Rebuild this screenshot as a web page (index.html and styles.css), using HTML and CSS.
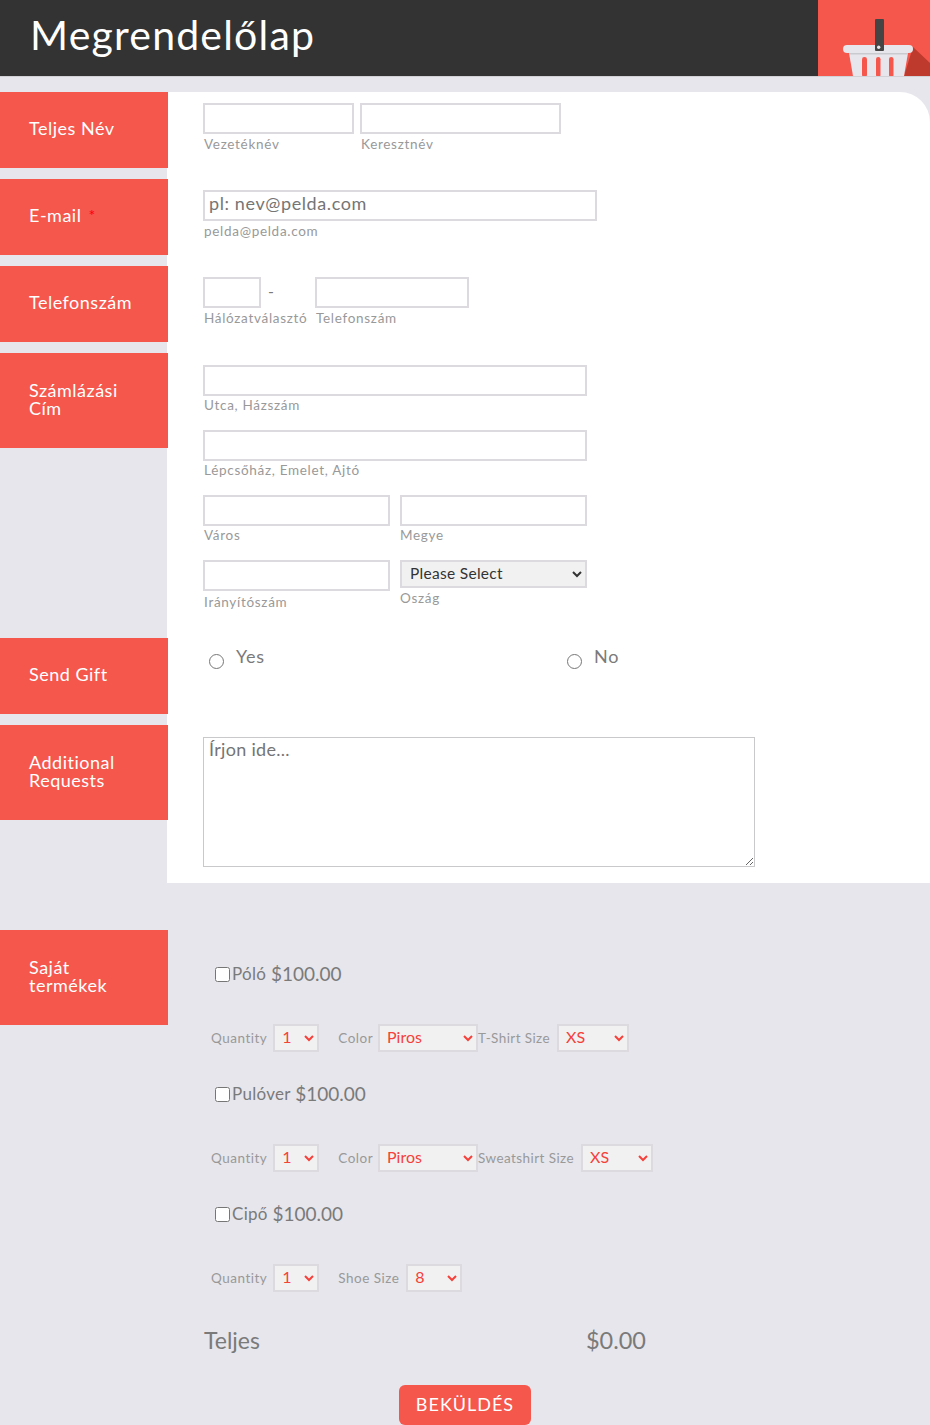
FILE: index.html
```html
<!DOCTYPE html>
<html lang="en">
<head>
  <meta charset="UTF-8">
  <title>Megrendelőlap</title>
  <link rel="stylesheet" href="styles.css">
</head>
<body>

<header class="top">
  <h1>Megrendelőlap</h1>
  <div class="basket">
    <svg width="112" height="76" viewBox="0 0 112 76">
      <polygon points="86,76 95,47 112,63 112,76" fill="#bd3a2c"/>
      <path d="M31 53h59l-4 23H35z" fill="#e6e6ec"/>
      <rect x="25" y="45" width="70" height="8" rx="4" fill="#e6e6ec"/>
      <rect x="31" y="53" width="59" height="1.500" fill="#c9c9d0"/>
      <rect x="44" y="57" width="5" height="20" rx="2.400" fill="#f5574d"/>
      <rect x="58" y="57" width="4.500" height="20" rx="2.200" fill="#f5574d"/>
      <rect x="71" y="57" width="4.500" height="20" rx="2.200" fill="#f5574d"/>
      <rect x="57" y="19" width="9" height="32" rx="1" fill="#444"/>
      <circle cx="60.700" cy="47.300" r="1.700" fill="#e6e6ec"/>
    </svg>
  </div>
</header>

<main class="form">
  <section class="row row-first">
    <div class="tag">Teljes Név</div>
    <div class="fields">
      <div class="line">
        <label class="field"><input class="w151" type="text"><span class="sub">Vezetéknév</span></label>
        <label class="field"><input class="w201" type="text"><span class="sub">Keresztnév</span></label>
      </div>
    </div>
  </section>

  <section class="row">
    <div class="tag">E-mail <span class="req">*</span></div>
    <div class="fields">
      <label class="field"><input class="w394" type="text" placeholder="pl: nev@pelda.com"><span class="sub">pelda@pelda.com</span></label>
    </div>
  </section>

  <section class="row">
    <div class="tag">Telefonszám</div>
    <div class="fields">
      <div class="line">
        <label class="field field-area">
          <span class="area"><input class="w58" type="text"><span class="dash">-</span></span>
          <span class="sub">Hálózatválasztó</span>
        </label>
        <label class="field"><input class="w154" type="text"><span class="sub">Telefonszám</span></label>
      </div>
    </div>
  </section>

  <section class="row row-address">
    <div class="tag tag-tall">Számlázási Cím</div>
    <div class="fields">
      <label class="field"><input class="w384" type="text"><span class="sub">Utca, Házszám</span></label>
      <label class="field"><input class="w384" type="text"><span class="sub">Lépcsőház, Emelet, Ajtó</span></label>
      <div class="line wide">
        <label class="field"><input class="w187" type="text"><span class="sub">Város</span></label>
        <label class="field"><input class="w187" type="text"><span class="sub">Megye</span></label>
      </div>
      <div class="line wide">
        <label class="field"><input class="w187 zip" type="text"><span class="sub">Irányítószám</span></label>
        <label class="field"><select class="country"><option>Please Select</option></select><span class="sub">Oszág</span></label>
      </div>
    </div>
  </section>

  <section class="row">
    <div class="tag">Send Gift</div>
    <div class="fields radios">
      <label class="radio"><input type="radio" name="gift"><span>Yes</span></label>
      <label class="radio"><input type="radio" name="gift"><span>No</span></label>
    </div>
  </section>

  <section class="row row-notes">
    <div class="tag tag-tall">Additional Requests</div>
    <div class="fields">
      <textarea class="notes" placeholder="Írjon ide..."></textarea>
    </div>
  </section>

  <section class="row row-products">
    <div class="tag tag-tall">Saját termékek</div>
    <div class="products">
      <div class="product">
        <label class="item"><input type="checkbox">Póló <b>$100.00</b></label>
        <div class="opts">
          <span class="opt">Quantity</span><select class="s46"><option>1</option></select>
          <span class="opt opt-color">Color</span><select class="s100"><option>Piros</option></select>
          <span class="opt opt-size">T-Shirt Size</span><select class="s72"><option>XS</option></select>
        </div>
      </div>
      <div class="product">
        <label class="item"><input type="checkbox">Pulóver <b>$100.00</b></label>
        <div class="opts">
          <span class="opt">Quantity</span><select class="s46"><option>1</option></select>
          <span class="opt opt-color">Color</span><select class="s100"><option>Piros</option></select>
          <span class="opt opt-size">Sweatshirt Size</span><select class="s72"><option>XS</option></select>
        </div>
      </div>
      <div class="product">
        <label class="item"><input type="checkbox">Cipő <b>$100.00</b></label>
        <div class="opts">
          <span class="opt">Quantity</span><select class="s46"><option>1</option></select>
          <span class="opt opt-color">Shoe Size</span><select class="s56"><option>8</option></select>
        </div>
      </div>
      <div class="total">
        <span>Teljes</span>
        <span class="sum">$0.00</span>
      </div>
    </div>
  </section>

  <div class="submit">
    <button type="button">BEKÜLDÉS</button>
  </div>
</main>

</body>
</html>
```

FILE: styles.css
```css
* {
  box-sizing: border-box;
}

html, body {
  height: 1425px;
  overflow: hidden;
}

body {
  margin: 0;
  background: #e6e6ec;
  font-family: Lato, sans-serif;
  color: #7a7a7a;
}

.top {
  display: flex;
  justify-content: space-between;
  height: 77px;
  background: #333;
  border-bottom: 1px solid #d2d2d6;
}

.top h1 {
  margin: 0;
  padding: 10px 0 0 30px;
  font-size: 41px;
  line-height: 50px;
  font-weight: 400;
  letter-spacing: 1.2px;
  color: white;
}

.basket {
  width: 112px;
  height: 76px;
  background: #f5574d;
}

.basket svg {
  display: block;
}

.form {
  padding-top: 15px;
}

.row {
  display: grid;
  grid-template-columns: 167px 1fr;
  height: 87px;
}

.row-address {
  height: 285px;
}

.row-notes {
  height: 158px;
}

.row-products {
  height: 455px;
  margin-top: 47px;
}

.tag {
  position: relative;
  width: 168px;
  height: 76px;
  padding: 27px 0 0 29px;
  background: #f5574d;
  color: white;
  font-size: 18px;
  line-height: 18px;
  letter-spacing: 0.5px;
}

.tag-tall {
  height: 95px;
  padding-top: 28px;
  padding-right: 30px;
}

.req {
  margin-left: 2px;
  color: red;
  font-size: 16px;
  line-height: 10px;
  vertical-align: 1px;
}

.fields {
  background: white;
  padding: 11px 0 0 36px;
}

.row-first .fields {
  border-top-right-radius: 30px;
}

.line {
  display: flex;
  gap: 6px;
}

.wide {
  gap: 10px;
}

.field {
  display: block;
}

.field-area {
  width: 106px;
}

.area {
  display: flex;
}

input[type="text"] {
  display: block;
  height: 31px;
  padding: 0 4px 5px;
  border: 2px solid #dcdade;
  background: white;
  font-family: Lato, sans-serif;
  font-size: 18px;
  letter-spacing: 0.6px;
}

input::placeholder,
textarea::placeholder {
  color: #757575;
}

.w58 { width: 58px; }
.w151 { width: 151px; }
.w154 { width: 154px; }
.w187 { width: 187px; }
.w201 { width: 201px; }
.w384 { width: 384px; }
.w394 { width: 394px; }

.zip {
  height: 32px;
}

.sub {
  display: block;
  height: 34px;
  padding: 1px 0 0 1px;
  font-size: 13.5px;
  line-height: 18px;
  letter-spacing: 0.7px;
  color: #999;
  white-space: nowrap;
}

.row-address .sub {
  padding-top: 0;
}

.row-address .zip + .sub {
  padding-top: 2px;
}

.row-address .country + .sub {
  padding-top: 1px;
}

.wide .field + .field .sub {
  padding-left: 0;
}

.dash {
  padding: 4px 0 0 7px;
}

.row-address .fields {
  padding-top: 12px;
}

.country {
  display: block;
  width: 187px;
  height: 28px;
  padding: 0 0 3px 4px;
  border: 2px solid #dcdade;
  background: #f1f1f1;
  font-family: Lato, sans-serif;
  font-size: 15.5px;
  letter-spacing: 0.3px;
  color: #333;
}

.radios {
  display: flex;
  padding: 0 0 0 42px;
}

.radio {
  display: flex;
  width: 358px;
  padding-top: 7px;
  font-size: 18px;
  letter-spacing: 0.7px;
}

.radio input {
  width: 15px;
  height: 15px;
  margin: 9px 12px 0 0;
}

.notes {
  display: block;
  width: 552px;
  height: 130px;
  padding: 0 5px;
  border: 1px solid #c9c9cc;
  background: white;
  font-family: Lato, sans-serif;
  font-size: 18px;
  letter-spacing: 0.3px;
}

.row-notes .fields {
  padding-top: 12px;
}

.products {
  padding: 34px 0 0 44px;
}

.product {
  height: 120px;
}

.item {
  display: flex;
  align-items: center;
  gap: 2px;
  height: 18px;
  margin-left: 4px;
  font-size: 17px;
  letter-spacing: 0.3px;
  white-space: pre;
}

.item input {
  width: 15px;
  height: 15px;
  margin: 2px 0 0;
}

.item b {
  margin-left: -2px;
  font-weight: 400;
  font-size: 19px;
  letter-spacing: 0;
}

.opts {
  display: flex;
  align-items: center;
  height: 28px;
  margin-top: 42px;
}

.opt {
  margin-right: 6px;
  font-size: 13.5px;
  letter-spacing: 0.5px;
  color: #999;
  white-space: nowrap;
}

.opt-color {
  margin-left: 19px;
  margin-right: 5px;
}

.opt-size {
  margin-right: 7px;
  letter-spacing: 0.42px;
}

.opts select {
  height: 28px;
  padding: 0 0 5px 3px;
  border: 2px solid #dcdade;
  background: #f1f1f1;
  font-family: Lato, sans-serif;
  font-size: 16px;
  color: #f5413a;
}

.s46 { width: 46px; }
.s56 { width: 56px; margin-left: 2px; }
.s72 { width: 72px; }
.s100 { width: 100px; }

.total {
  display: flex;
  justify-content: space-between;
  width: 442px;
  margin: 2px 0 0 -7px;
  font-size: 23px;
}

.sum {
  font-size: 23.5px;
}

.submit {
  display: flex;
  justify-content: center;
}

.submit button {
  width: 132px;
  height: 40px;
  padding-bottom: 4px;
  border: none;
  border-radius: 6px;
  background: #f5574d;
  color: white;
  font-family: Lato, sans-serif;
  font-size: 18px;
  letter-spacing: 1px;
}
```
